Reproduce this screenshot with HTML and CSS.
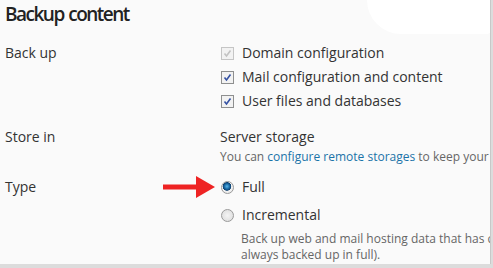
FILE: index.html
```html
<!DOCTYPE html>
<html lang="en">
<head>
    <meta charset="UTF-8">
    <title>Backup content</title>
    <link rel="stylesheet" href="styles.css">
</head>
<body>
    <div class="panel">
        <div class="scribble"></div>
        <h1 class="title">Backup content</h1>

        <div class="form-row backup-row">
            <div class="form-label">Back up</div>
            <div class="form-field">
                <label class="check disabled"><span class="box"><svg viewBox="0 0 9 9"><path d="M1.5 4.5 L3.5 7 L7.5 1.5" /></svg></span>Domain configuration</label>
                <label class="check"><span class="box"><svg viewBox="0 0 9 9"><path d="M1.5 4.5 L3.5 7 L7.5 1.5" /></svg></span>Mail configuration and content</label>
                <label class="check"><span class="box"><svg viewBox="0 0 9 9"><path d="M1.5 4.5 L3.5 7 L7.5 1.5" /></svg></span>User files and databases</label>
            </div>
        </div>

        <div class="form-row store-row">
            <div class="form-label">Store in</div>
            <div class="form-field">
                <div class="value">Server storage</div>
                <div class="hint">You can <a href="#">configure remote storages</a> to keep your</div>
            </div>
        </div>

        <div class="form-row type-row">
            <div class="form-label">Type</div>
            <div class="form-field">
                <label class="radio checked">
                    <svg class="arrow" viewBox="0 0 52 22"><path d="M0 8.5 H33 V0 L52 11 L33 22 V13.5 H0 Z" /></svg>
                    <span class="dot"></span>Full
                </label>
                <label class="radio"><span class="dot"></span>Incremental</label>
                <div class="hint desc">Back up web and mail hosting data that has c<br>always backed up in full).</div>
            </div>
        </div>
    </div>
</body>
</html>
```

FILE: styles.css
```css
body {
    margin: 0;
    background: #dcdcdc;
    font-family: "Open Sans", "Noto Sans", sans-serif;
    color: #333;
    overflow: hidden;
}

.panel {
    position: relative;
    width: 491px;
    height: 264px;
    background: #fafafa;
    border-right: 1px solid #c8c8c8;
    box-sizing: border-box;
    padding: 0 0 0 5px;
    overflow: hidden;
}

/* white smudge covering the top right corner */
.scribble {
    position: absolute;
    top: 0;
    right: -2px;
    width: 125px;
    height: 34px;
    background: #fff;
    border-radius: 0 0 10px 60px;
}

.title {
    margin: 0;
    padding-top: 1px;
    font-size: 19px;
    font-weight: 600;
    line-height: 26px;
    letter-spacing: -1.5px;
    word-spacing: 1px;
    color: #222;
}

.form-row {
    display: flex;
    font-size: 14px;
    line-height: 24px;
}

.backup-row {
    margin-top: 14px;
}

.form-label {
    width: 215px;
    flex-shrink: 0;
}

.form-field {
    white-space: nowrap;
}

.check,
.radio {
    position: relative;
    display: flex;
    align-items: center;
    height: 24px;
}

.box {
    width: 11px;
    height: 11px;
    border: 1px solid #8e8f8f;
    background: #f2f2f2;
    margin: 0 8px 0 1px;
    display: flex;
}

.box svg {
    width: 9px;
    height: 9px;
    margin: 1px;
    fill: none;
    stroke: #3451a3;
    stroke-width: 1.6;
}

.check.disabled .box {
    border-color: #c5c5c5;
}

.check.disabled .box svg {
    stroke: #c2c2c2;
}

.store-row {
    margin-top: 12px;
}

.hint {
    font-size: 12px;
    line-height: 16px;
    color: #666;
}

.hint a {
    color: #1a73a8;
    text-decoration: none;
}

.type-row {
    margin-top: 8px;
}

.type-row .form-label {
    padding-top: 2px;
}

.radio {
    height: 28px;
}

.dot {
    width: 11px;
    height: 11px;
    border-radius: 50%;
    border: 1px solid #9a9a9a;
    background: radial-gradient(circle, #f4f4f4 0, #dadada 100%);
    margin: 0 8px 0 1px;
    box-sizing: content-box;
}

.radio.checked .dot {
    background: radial-gradient(circle at 45% 40%, #5ab6e8 0, #1b6ca8 2.5px, #0d3f6e 4px, #f2f2f2 4.6px, #e2e2e2 100%);
}

.desc {
    padding-left: 21px;
    margin-top: 2px;
}

.arrow {
    position: absolute;
    left: -57px;
    top: 3px;
    width: 52px;
    height: 22px;
    fill: #ee2323;
}
```
